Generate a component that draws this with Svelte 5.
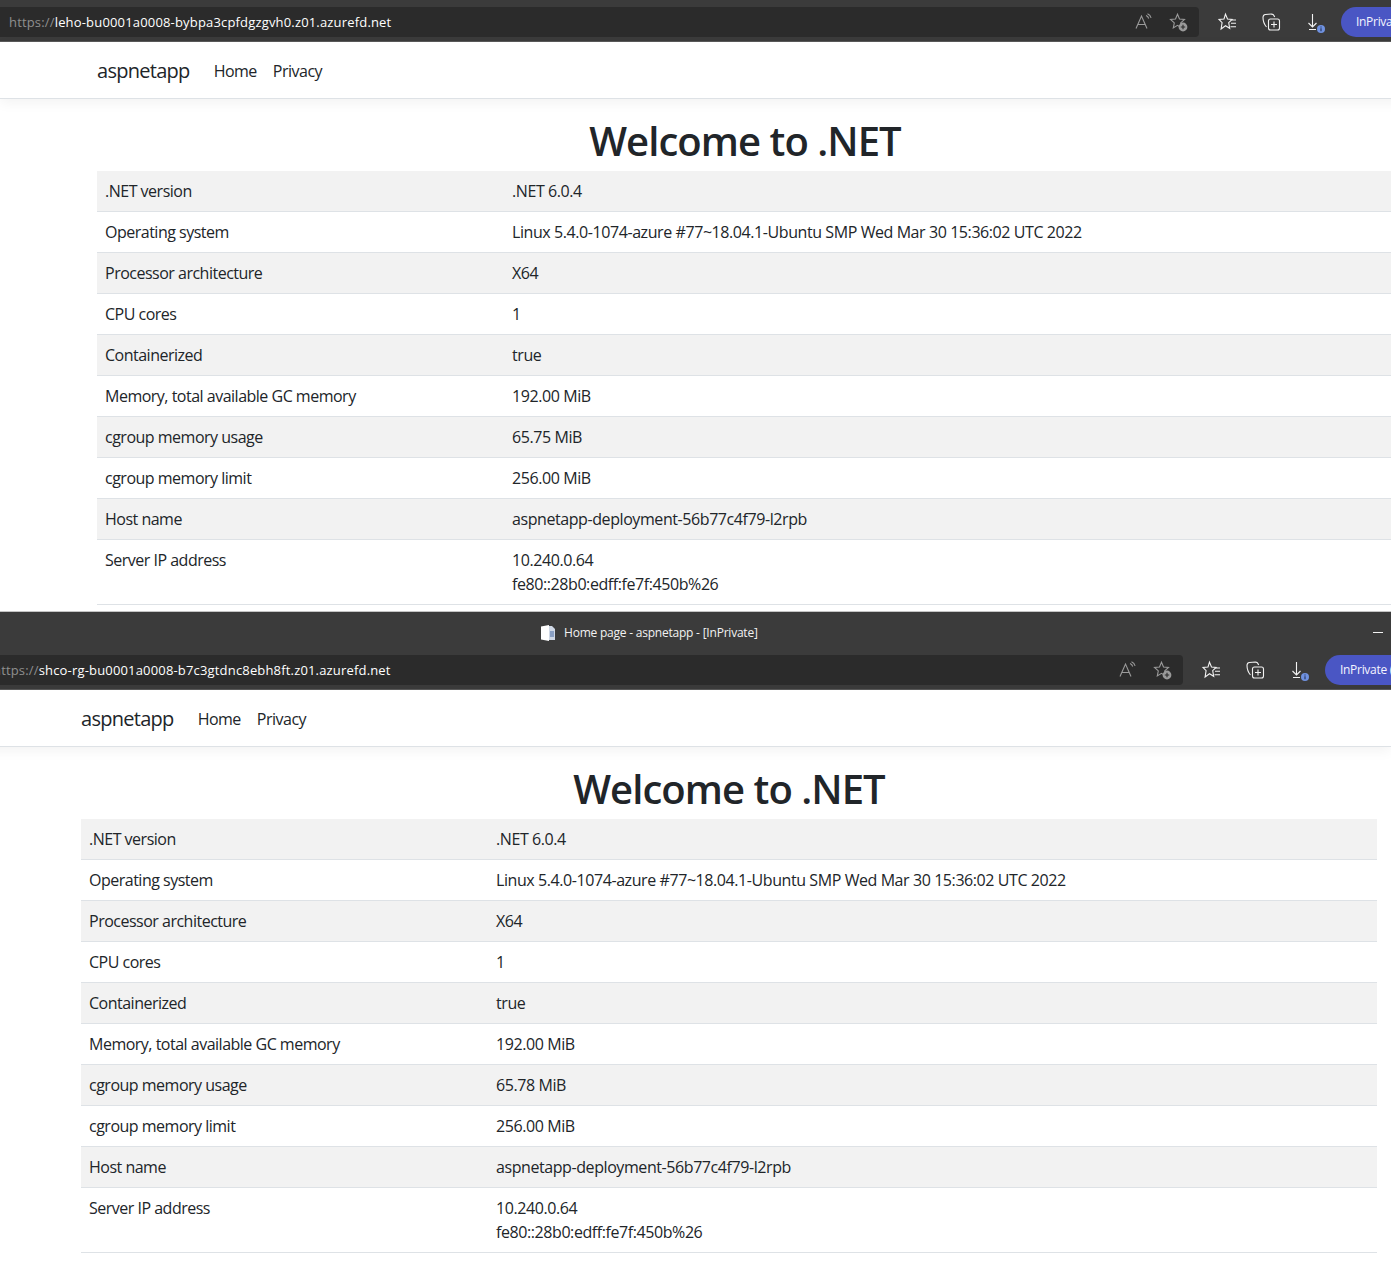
<script lang="ts">
  const windows = [
    {
      scheme: 'https://',
      host: 'leho-bu0001a0008-bybpa3cpfdgzgvh0.z01.azurefd.net',
      usage: '65.75 MiB',
      titled: false
    },
    {
      scheme: 'https://',
      host: 'shco-rg-bu0001a0008-b7c3gtdnc8ebh8ft.z01.azurefd.net',
      usage: '65.78 MiB',
      titled: true
    }
  ];

  function rowsFor(usage: string) {
    return [
      ['.NET version', ['.NET 6.0.4']],
      ['Operating system', ['Linux 5.4.0-1074-azure #77~18.04.1-Ubuntu SMP Wed Mar 30 15:36:02 UTC 2022']],
      ['Processor architecture', ['X64']],
      ['CPU cores', ['1']],
      ['Containerized', ['true']],
      ['Memory, total available GC memory', ['192.00 MiB']],
      ['cgroup memory usage', [usage]],
      ['cgroup memory limit', ['256.00 MiB']],
      ['Host name', ['aspnetapp-deployment-56b77c4f79-l2rpb']],
      ['Server IP address', ['10.240.0.64', 'fe80::28b0:edff:fe7f:450b%26']]
    ];
  }
</script>

{#snippet readAloud()}
  <svg class="icon" viewBox="0 0 20 20" fill="none" stroke="#9a9a9a" stroke-width="1.1">
    <path d="M3 16.5 8.5 4l5.5 12.5M4.8 12.5h7.4" />
    <path d="M13 3.5c1.4.6 2.3 1.6 2.7 3M14.5 1.8c1.9.8 3.1 2.1 3.6 4" />
  </svg>
{/snippet}

{#snippet starAdd()}
  <svg class="icon" viewBox="0 0 20 20" fill="none" stroke="#9a9a9a" stroke-width="1.1">
    <path d="M8.5 2.2l2 4.8 5 .5-3.8 3.4 1 5-4.2-2.6-4.2 2.6 1-5-3.8-3.4 5-.5z" />
    <circle cx="14" cy="15" r="4.4" fill="#9a9a9a" stroke="none" />
    <path d="M14 12.8v4.4M11.8 15h4.4" stroke="#2b2b2b" stroke-width="1.1" />
  </svg>
{/snippet}

{#snippet favorites()}
  <svg class="icon" viewBox="0 0 20 20" fill="none" stroke="#f2f2f2" stroke-width="1.1">
    <path d="M8.5 2.2l2 4.8 4.6.5-3.4 3.2 1 5.6-4.2-2.6-4.4 3.3 1-6.3L2 7.5l5-.5z" />
    <path d="M14.5 8h4.5M14 11.3h5M13.5 14.7h5.5" />
  </svg>
{/snippet}

{#snippet collections()}
  <svg class="icon" viewBox="0 0 20 20" fill="none" stroke="#f2f2f2" stroke-width="1.1">
    <path d="M5.5 15C3.8 13 2 9 2 5.5c0-1.6.8-2.8 2.4-3l6-.5c1.6 0 2.6 1 3.3 3" />
    <rect x="7.5" y="7" width="11" height="11" rx="2" />
    <path d="M13 9.5v6M10 12.5h6" />
  </svg>
{/snippet}

{#snippet download()}
  <svg class="icon" viewBox="0 0 20 20" fill="none" stroke="#f2f2f2" stroke-width="1.1">
    <path d="M7.5 2v13M3.5 11l4 4 4-4M4 17.5h7" />
    <circle cx="16" cy="17" r="4" fill="#7092e0" stroke="none" />
    <path d="M16 16.2v3M16 14.4v1" stroke="#20305c" stroke-width="1.1" />
  </svg>
{/snippet}

{#each windows as win}
  <section class="window" class:second={win.titled}>
    <div class="inner">
      {#if win.titled}
        <div class="titlebar">
          <svg class="pageicon" viewBox="0 0 16 16">
            <path d="M1 1.5 9 0v16l-8-1.5z" fill="#fff" />
            <path d="M9 1h3l3 3v11H9z" fill="#cfd8e6" />
            <path d="M10 6h4v6h-4z" fill="#8aa0c4" />
          </svg>
          <span class="title">Home page - aspnetapp - [InPrivate]</span>
          <span class="minimize"></span>
        </div>
      {:else}
        <div class="strip"></div>
      {/if}

      <div class="toolbar">
        <div class="address">
          <span class="url"><span class="scheme">{win.scheme}</span>{win.host}</span>
          <span class="addr-icons">
            {@render readAloud()}
            {@render starAdd()}
          </span>
        </div>
        <div class="tools">
          {@render favorites()}
          {@render collections()}
          {@render download()}
        </div>
        <div class="pill">InPrivate (2)</div>
      </div>

      <nav class="navbar">
        <a class="brand" href="/">aspnetapp</a>
        <a class="navlink" href="/">Home</a>
        <a class="navlink" href="/">Privacy</a>
      </nav>

      <main class="container">
        <h1>Welcome to .NET</h1>
        <table>
          <tbody>
            {#each rowsFor(win.usage) as [label, values]}
              <tr>
                <td class="label">{label}</td>
                <td class="value">
                  {#each values as value}
                    <div>{value}</div>
                  {/each}
                </td>
              </tr>
            {/each}
          </tbody>
        </table>
      </main>
    </div>
  </section>
{/each}

<style>
  :global(body) {
    margin: 0;
    background: #fff;
    font-family: "Open Sans", "Noto Sans", sans-serif;
    color: #212529;
    overflow: hidden;
  }

  .window {
    overflow: hidden;
    width: 1391px;
  }

  .inner {
    width: 1407px;
  }

  .second .inner {
    margin-left: -16px;
  }

  .second {
    border-top: 1px solid #c4c4c4;
  }

  .strip {
    height: 7px;
    background: #3b3b3b;
  }

  .titlebar {
    height: 43px;
    background: #3b3b3b;
    display: flex;
    align-items: center;
    padding: 0 8px 2px 556px;
    box-sizing: border-box;
    color: #f2f2f2;
  }

  .pageicon {
    width: 16px;
    height: 16px;
    margin-right: 8px;
  }

  .title {
    font-size: 12px;
    letter-spacing: -0.22px;
  }

  .minimize {
    margin-left: auto;
    width: 10px;
    height: 1px;
    background: #f2f2f2;
  }

  .toolbar {
    height: 34px;
    background: #3b3b3b;
    display: flex;
    align-items: flex-start;
    border-bottom: 1px solid #5a5a5a;
  }

  .address {
    flex: none;
    width: 1199px;
    height: 30px;
    box-sizing: border-box;
    background: #2b2b2b;
    border-radius: 0 4px 4px 0;
    display: flex;
    align-items: center;
    padding: 0 10px 0 9px;
  }

  .url {
    font-size: 13px;
    color: #fff;
    letter-spacing: 0.17px;
  }

  .scheme {
    color: #8f8f8f;
  }

  .addr-icons {
    margin-left: auto;
    display: flex;
    gap: 16px;
  }

  .icon {
    width: 20px;
    height: 20px;
    flex: none;
    display: block;
    overflow: visible;
  }

  .tools {
    display: flex;
    gap: 24px;
    margin: 5px 16px 0 18px;
  }

  .pill {
    flex: none;
    width: 90px;
    height: 30px;
    box-sizing: border-box;
    padding-left: 15px;
    border-radius: 15px 0 0 15px;
    background: #4a56c4;
    color: #f4f4ff;
    font-size: 12px;
    line-height: 30px;
    letter-spacing: -0.3px;
    white-space: nowrap;
    overflow: hidden;
  }

  .navbar {
    height: 57px;
    box-sizing: border-box;
    border-bottom: 1px solid #dee2e6;
    box-shadow: 0 4px 12px rgba(0, 0, 0, 0.05);
    display: flex;
    align-items: center;
    padding-left: 97px;
  }

  .navbar a {
    color: #212529;
    text-decoration: none;
  }

  .brand {
    font-size: 20px;
    margin-right: 24px;
    letter-spacing: -0.72px;
  }

  .navlink {
    font-size: 16px;
    margin-right: 16px;
    padding-top: 2px;
    letter-spacing: -0.5px;
  }

  .container {
    width: 1296px;
    margin-left: 97px;
    padding: 18px 0 6px;
  }

  h1 {
    margin: 0 0 6px;
    font-size: 40px;
    line-height: 48px;
    font-weight: 600;
    text-align: center;
    letter-spacing: -0.95px;
  }

  table {
    width: 100%;
    border-collapse: collapse;
    font-size: 16px;
    line-height: 24px;
  }

  td {
    padding: 8px;
    vertical-align: top;
    border-bottom: 1px solid #dee2e6;
  }

  .label {
    width: 391px;
    letter-spacing: -0.5px;
  }

  .value {
    letter-spacing: -0.42px;
  }

  tr:nth-child(odd) td {
    background: #f2f2f2;
  }
</style>
